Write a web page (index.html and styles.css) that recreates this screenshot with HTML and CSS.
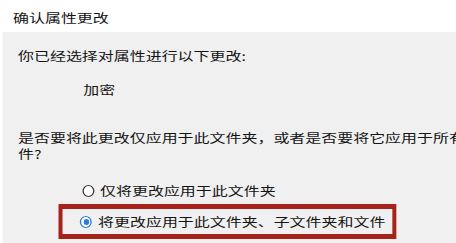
FILE: index.html
```html
<!DOCTYPE html>
<html lang="zh-CN">
<head>
<meta charset="utf-8">
<title>确认属性更改</title>
<link rel="stylesheet" href="styles.css">
</head>
<body>
<div class="stage">
  <div class="titlebar">确认属性更改</div>
  <div class="panel">
    <p class="line intro">你已经选择对属性进行以下更改:</p>
    <p class="line attr">加密</p>
    <p class="line question">是否要将此更改仅应用于此文件夹，或者是否要将它应用于所有<br>件?</p>
    <div class="options">
      <div class="option">
        <span class="radio"></span>
        <span class="label">仅将更改应用于此文件夹</span>
      </div>
      <div class="highlight">
        <div class="option">
          <span class="radio checked"></span>
          <span class="label">将更改应用于此文件夹、子文件夹和文件</span>
        </div>
      </div>
    </div>
  </div>
</div>
</body>
</html>
```
FILE: styles.css
```css
html, body {
  margin: 0;
  padding: 0;
  width: 456px;
  height: 243px;
  overflow: hidden;
  background: #ffffff;
}

.stage {
  width: 343px;
  height: 243px;
  transform: scaleX(1.33);
  transform-origin: 0 0;
  font-family: "Noto Sans CJK SC", "Microsoft YaHei", sans-serif;
  font-size: 12px;
  color: #141414;
  display: flex;
  flex-direction: column;
}

.titlebar {
  height: 32px;
  box-sizing: border-box;
  padding: 2px 0 0 9.8px;
  display: flex;
  align-items: center;
  background: #ffffff;
  white-space: nowrap;
}

.panel {
  flex: 1;
  margin-left: 2.26px;
  padding-left: 11.3px;
  background: #f0f0f0;
  white-space: nowrap;
}

.line {
  margin: 0;
  line-height: 16px;
}

.intro {
  margin-top: 16px;
}

.attr {
  margin-top: 18px;
  padding-left: 49px;
}

.question {
  margin-top: 31.5px;
}

.options {
  margin-top: 21.5px;
  display: flex;
  flex-direction: column;
}

.option {
  display: flex;
  align-items: center;
  height: 16px;
  padding-left: 48.2px;
}

.highlight {
  margin-top: 5px;
  margin-left: 30.9px;
  width: 253.3px;
  box-sizing: border-box;
  height: 35px;
  border: 5px solid #a8221c;
  border-left-width: 3.76px;
  border-right-width: 3.76px;
  display: flex;
  align-items: center;
}

.highlight .option {
  padding-left: 12.8px;
}

.radio {
  width: 9px;
  height: 12px;
  box-sizing: border-box;
  border-radius: 50%;
  border: 1px solid #3a3a3a;
  border-left-width: 0.75px;
  border-right-width: 0.75px;
  background: #ffffff;
  margin-right: 4.5px;
  flex: none;
  position: relative;
}

.radio.checked {
  border-color: #2b7ad4;
}

.radio.checked::after {
  content: "";
  position: absolute;
  left: 1.5px;
  top: 2px;
  width: 4.5px;
  height: 6px;
  border-radius: 50%;
  background: #2b7ad4;
}

.label {
  line-height: 16px;
}
```
